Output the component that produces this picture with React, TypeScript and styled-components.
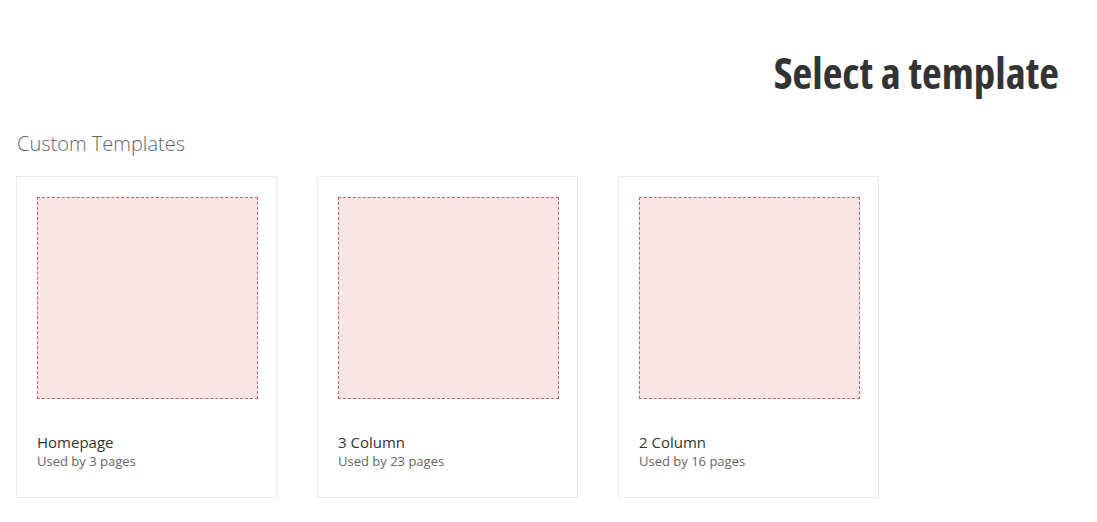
import styled, { createGlobalStyle } from "styled-components";

const GlobalStyle = createGlobalStyle`
  html, body {
    margin: 0;
    padding: 0;
    background: #ffffff;
    font-family: "Open Sans", "Liberation Sans", sans-serif;
  }
`;

const Page = styled.div`
  padding: 0 38px 0 16px;
`;

const Header = styled.div`
  display: flex;
  justify-content: flex-end;
  padding-top: 47px;
`;

const Title = styled.h1`
  margin: 0;
  font-size: 43px;
  line-height: 52px;
  font-weight: 700;
  font-stretch: 75%;
  letter-spacing: 0;
  color: #333333;
`;

const SectionTitle = styled.h2`
  margin: 31px 0 0 1px;
  font-size: 20px;
  line-height: 28px;
  font-weight: 300;
  color: #666666;
`;

const Grid = styled.div`
  display: flex;
  gap: 40px;
  margin-top: 18px;
`;

const Card = styled.div`
  box-sizing: border-box;
  width: 261px;
  height: 322px;
  border: 1px solid #ececec;
  padding: 20px;
  display: flex;
  flex-direction: column;
`;

const Preview = styled.div`
  box-sizing: border-box;
  width: 221px;
  height: 202px;
  background: #fae5e6;
  border: 1px dashed #c4666d;
`;

const Name = styled.div`
  margin-top: 33px;
  font-size: 15px;
  line-height: 20px;
  color: #333333;
`;

const Usage = styled.div`
  font-size: 13px;
  line-height: 18px;
  color: #666666;
`;

const templates = [
  { name: "Homepage", pages: 3 },
  { name: "3 Column", pages: 23 },
  { name: "2 Column", pages: 16 },
];

export default function App() {
  return (
    <>
      <GlobalStyle />
      <Page>
        <Header>
          <Title>Select a template</Title>
        </Header>
        <SectionTitle>Custom Templates</SectionTitle>
        <Grid>
          {templates.map((t) => (
            <Card key={t.name}>
              <Preview />
              <Name>{t.name}</Name>
              <Usage>Used by {t.pages} pages</Usage>
            </Card>
          ))}
        </Grid>
      </Page>
    </>
  );
}
